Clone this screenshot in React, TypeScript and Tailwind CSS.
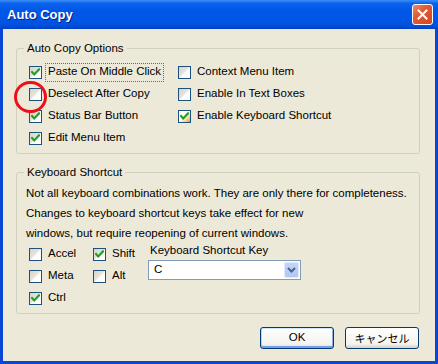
import React from 'react';

const ui = "font-['Liberation_Sans',Arial,sans-serif] text-[11.5px] text-black";

function Check() {
  return (
    <svg width="9" height="9" viewBox="0 0 9 9" className="block">
      <path d="M1 4 L3.2 6.4 L8 1.4" fill="none" stroke="#21A121" strokeWidth="2.2" strokeLinecap="square" />
    </svg>
  );
}

function Box({ checked, hover }: { checked?: boolean; hover?: boolean }) {
  return (
    <span
      className={
        hover
          ? 'w-[13px] h-[13px] shrink-0 border border-[#1C5180] flex items-center justify-center bg-[linear-gradient(135deg,#FFFFFF_45%,#FBD9A6_70%,#F09540_100%)]'
          : 'w-[13px] h-[13px] shrink-0 border border-[#1C5180] flex items-center justify-center bg-[linear-gradient(135deg,#D6D4CA_0%,#E6E4DC_48%,#FCFCFA_52%,#FFFFFF_100%)]'
      }
    >
      {checked && <Check />}
    </span>
  );
}

function Row({ label, checked, hover, focus }: { label: string; checked?: boolean; hover?: boolean; focus?: boolean }) {
  return (
    <div className="h-[22px] flex items-center">
      <Box checked={checked} hover={hover} />
      <span
        className={
          focus
            ? 'ml-[3px] px-[2px] h-[19px] flex items-center border border-dotted border-[#6B6B6B] whitespace-nowrap'
            : 'ml-[3px] px-[2px] h-[19px] flex items-center border border-transparent whitespace-nowrap'
        }
      >
        {label}
      </span>
    </div>
  );
}

function Group({ title, children, className }: { title: string; children: React.ReactNode; className?: string }) {
  return (
    <fieldset className={`w-[404px] ml-[13px] border border-[#D0D0BF] rounded-[3px] ${className ?? ''}`}>
      <legend className="ml-[7px] px-[3px] leading-[14px]">{title}</legend>
      {children}
    </fieldset>
  );
}

export default function App() {
  return (
    <div className={`relative w-[438px] h-[364px] flex flex-col bg-[#0A46D6] ${ui}`}>
      {/* title bar */}
      <div className="h-[29px] shrink-0 flex items-center justify-between bg-[linear-gradient(to_bottom,#3B8DF6_0%,#0A62EC_12%,#0058E8_35%,#0055E4_70%,#0050DC_88%,#0040C0_100%)]">
        <span className="ml-[7px] text-white font-bold text-[13px] [text-shadow:1px_1px_0_#0A1E8C]">Auto Copy</span>
        <span className="mr-[5px] w-[21px] h-[21px] rounded-[3px] border border-white flex items-center justify-center bg-[linear-gradient(135deg,#E98A6C_0%,#E05A35_40%,#D8441E_100%)]">
          <svg width="11" height="11" viewBox="0 0 11 11">
            <path d="M1.5 1.5 L9.5 9.5 M9.5 1.5 L1.5 9.5" stroke="#FFFFFF" strokeWidth="2" strokeLinecap="square" />
          </svg>
        </span>
      </div>

      {/* client area */}
      <div className="flex-1 mx-[3px] mb-[3px] bg-[#ECE9D8] pt-[12px] flex flex-col">
        <Group title="Auto Copy Options">
          <div className="grid grid-cols-[149px_1fr] pl-[12px] pt-[6px] pb-[4px]">
            <div className="flex flex-col">
              <Row label="Paste On Middle Click" checked focus />
              <Row label="Deselect After Copy" />
              <Row label="Status Bar Button" checked />
              <Row label="Edit Menu Item" checked />
            </div>
            <div className="flex flex-col">
              <Row label="Context Menu Item" />
              <Row label="Enable In Text Boxes" />
              <Row label="Enable Keyboard Shortcut" checked hover />
            </div>
          </div>
        </Group>

        <Group title="Keyboard Shortcut" className="mt-[11px]">
          <div className="pl-[9px] pt-[4px] pb-[4px]">
            <p className="leading-[20px] whitespace-nowrap">
              Not all keyboard combinations work. They are only there for completeness.
              <br />
              Changes to keyboard shortcut keys take effect for new
              <br />
              windows, but require reopening of current windows.
            </p>
            <div className="flex ml-[3px]">
              <div className="w-[64px] flex flex-col">
                <Row label="Accel" />
                <Row label="Meta" />
                <Row label="Ctrl" checked />
              </div>
              <div className="w-[55px] flex flex-col">
                <Row label="Shift" checked />
                <Row label="Alt" />
              </div>
              <div className="flex flex-col">
                <span className="ml-[2px] leading-[14px] whitespace-nowrap">Keyboard Shortcut Key</span>
                <div className="mt-[3px] w-[153px] h-[20px] border border-[#7F9DB9] bg-white flex items-center justify-between">
                  <span className="pl-[5px]">C</span>
                  <span className="mr-[1px] w-[15px] h-[16px] rounded-[2px] border border-[#E2EBFC] bg-[linear-gradient(to_bottom,#C4D5F8,#B1C6F4)] flex items-center justify-center">
                    <svg width="9" height="6" viewBox="0 0 9 6">
                      <path d="M1 1 L4.5 4.5 L8 1" fill="none" stroke="#4D6185" strokeWidth="2" />
                    </svg>
                  </span>
                </div>
              </div>
            </div>
          </div>
        </Group>

        <div className="mt-[13px] pl-[257px] flex gap-[11px]">
          <button className="w-[74px] h-[22px] rounded-[3px] border border-[#003C74] bg-[linear-gradient(to_bottom,#FFFFFF,#F4F3EE_80%,#DCD8CC)] shadow-[inset_0_-2px_0_#7A9BEB,inset_0_1px_0_#CEE7FF,inset_1px_0_0_#BCD4F6,inset_-1px_0_0_#89ADE4] flex items-center justify-center">
            OK
          </button>
          <button className="w-[74px] h-[22px] rounded-[3px] border border-[#003C74] bg-[linear-gradient(to_bottom,#FFFFFF,#F4F3EE_80%,#D6D0C5)] flex items-center justify-center font-['Noto_Sans_CJK_JP',sans-serif] text-[11px]">
            キャンセル
          </button>
        </div>
      </div>

      {/* red annotation circle */}
      <span className="absolute left-[14px] top-[81px] w-[33px] h-[32px] rounded-full border-[3px] border-[#EC1018]" />
    </div>
  );
}
